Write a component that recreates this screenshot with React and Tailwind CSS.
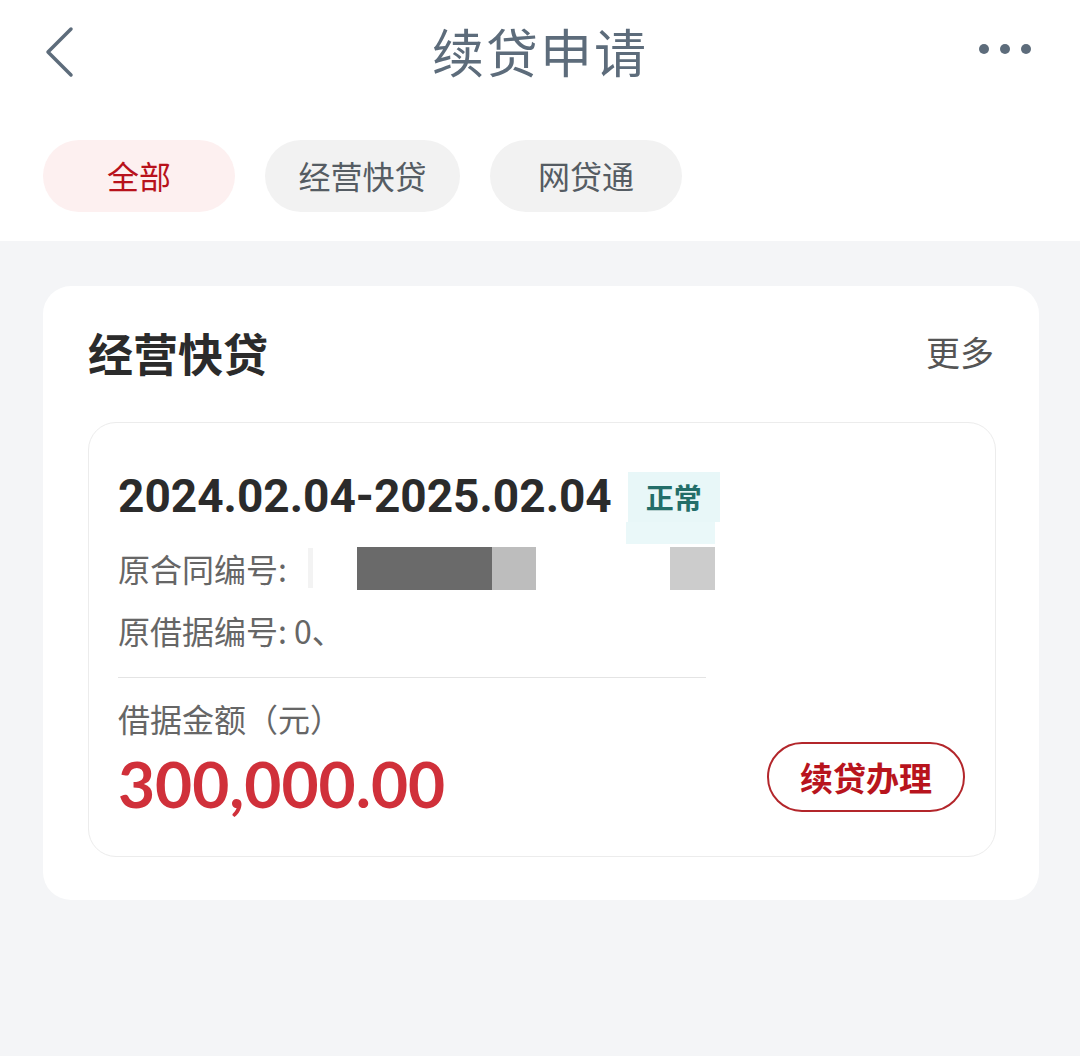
import React from 'react';

const cjk = { fontFamily: '"Noto Sans CJK SC", "Noto Sans", sans-serif' };

const BackIcon = () => (
  <svg width="32" height="52" viewBox="0 0 32 52" fill="none">
    <polyline points="28,3 5,26 28,49" stroke="#5d6c7b" strokeWidth="3.5" strokeLinecap="round" strokeLinejoin="round" />
  </svg>
);

const MoreIcon = () => (
  <svg width="56" height="12" viewBox="0 0 56 12">
    <circle cx="6" cy="6" r="5" fill="#5d6c7b" />
    <circle cx="27" cy="6" r="5" fill="#5d6c7b" />
    <circle cx="48" cy="6" r="5" fill="#5d6c7b" />
  </svg>
);

const tabs = [
  { label: '全部', active: true, w: 'w-[192px]' },
  { label: '经营快贷', active: false, w: 'w-[195px]' },
  { label: '网贷通', active: false, w: 'w-[192px]' },
];

export default function App() {
  return (
    <div className="w-[1080px] min-h-[1056px] bg-[#f4f5f7]" style={cjk}>
      {/* top bar + tabs */}
      <div className="bg-white h-[241px]">
        <div className="h-[104px] grid grid-cols-[1fr_auto_1fr] items-center px-[43px]">
          <div className="flex items-center">
            <BackIcon />
          </div>
          <h1 className="text-[52px] leading-none text-[#5d6c7b] tracking-[2px] -mt-[2px]">续贷申请</h1>
          <div className="flex justify-end pr-[3px] -mt-[6px]">
            <MoreIcon />
          </div>
        </div>
        <div className="flex gap-[30px] px-[43px] mt-[36px]">
          {tabs.map((t) => (
            <div
              key={t.label}
              className={`${t.w} h-[72px] rounded-full flex items-center justify-center text-[32px] leading-none pb-[3px] ${
                t.active ? 'bg-[#fdf0f0] text-[#b8121b]' : 'bg-[#f2f2f2] text-[#555c63]'
              }`}
            >
              {t.label}
            </div>
          ))}
        </div>
      </div>

      {/* content */}
      <div className="pl-[43px] pr-[41px] pt-[45px]">
        <div className="bg-white rounded-[28px] pl-[45px] pr-[43px] pt-[40px] pb-[43px]">
          <div className="flex items-center justify-between h-[52px]">
            <h2 className="text-[45px] leading-none font-bold text-[#2b2b2b]">经营快贷</h2>
            <span className="text-[34px] leading-none text-[#555] pr-[2px]">更多</span>
          </div>

          <div className="mt-[44px] border border-[#ececec] rounded-[28px] pl-[29px] pr-[30px] pt-[49px] pb-[40px]">
            <div className="flex items-start">
              <span
                className="text-[46px] leading-none font-bold text-[#2b2b2b] mt-[1px]"
                style={{ fontFamily: 'Roboto, "Liberation Sans", sans-serif' }}
              >
                2024.02.04-2025.02.04
              </span>
              <div className="relative ml-[16px]">
                <div className="w-[92px] h-[50px] bg-[#e8f7f8] flex items-center justify-center text-[28px] leading-none font-bold text-[#236e69]">
                  正常
                </div>
                <div className="absolute left-[-2px] top-[50px] w-[89px] h-[22px] bg-[#eaf8f9]" />
              </div>
            </div>

            <div className="mt-[24px] flex items-center h-[44px] text-[32px] leading-none text-[#666]">
              <span>原合同编号:</span>
              <span className="ml-[21px] w-[5px] h-[40px] bg-[#f3f3f3]" />
              <span className="ml-[44px] w-[135px] h-[43px] bg-[#6a6a6a]" />
              <span className="w-[44px] h-[43px] bg-[#bdbdbd]" />
              <span className="ml-[134px] w-[45px] h-[43px] bg-[#cccccc]" />
            </div>

            <div className="mt-[18px] flex items-center h-[44px] text-[32px] leading-none text-[#666]">
              <span>原借据编号: 0、</span>
            </div>

            <div className="mt-[25px] w-[588px] h-px bg-[#e4e4e4]" />

            <div className="flex items-end justify-between">
              <div>
                <div className="mt-[18px] h-[44px] flex items-center text-[32px] leading-none text-[#666]">
                  借据金额（元）
                </div>
                <div
                  className="mt-[12px] text-[64px] leading-none font-bold text-[#d0303a]"
                  style={{ fontFamily: 'Lato, "Liberation Sans", sans-serif' }}
                >
                  300,000.00
                </div>
              </div>
              <div className="mb-[4px] w-[198px] h-[70px] rounded-full border-2 border-[#b3262b] flex items-center justify-center text-[33px] leading-none font-bold text-[#b8141d]">
                续贷办理
              </div>
            </div>
          </div>
        </div>
      </div>
    </div>
  );
}
